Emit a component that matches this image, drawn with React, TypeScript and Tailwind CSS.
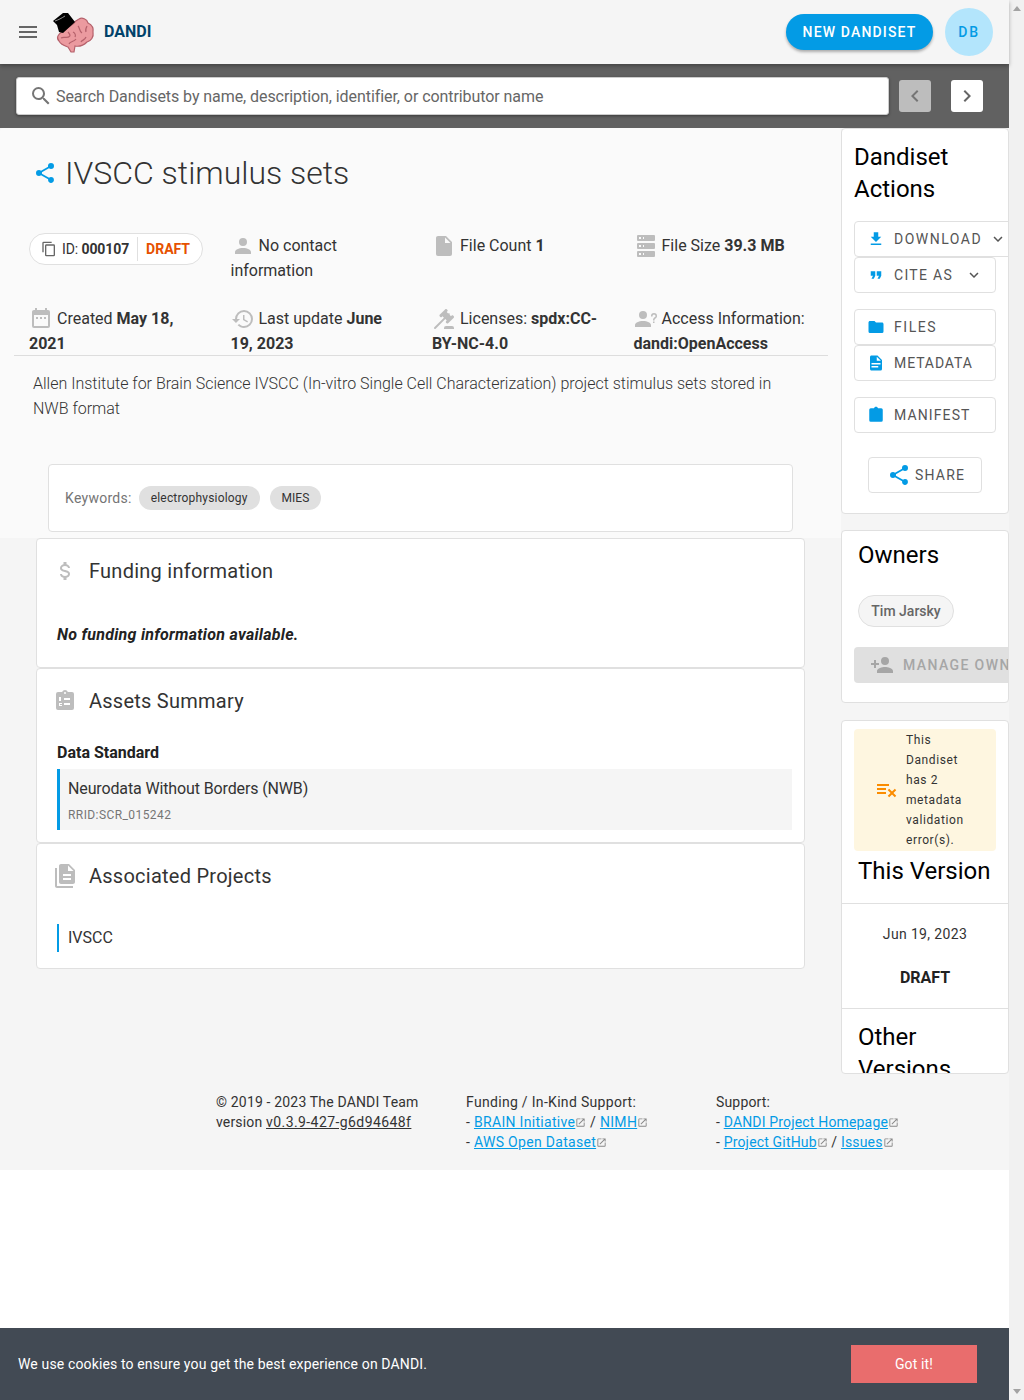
import React from "react";

const paths = {
  menu: "M3,6H21V8H3V6M3,11H21V13H3V11M3,16H21V18H3V16Z",
  search:
    "M9.5,3A6.5,6.5 0 0,1 16,9.5C16,11.11 15.41,12.59 14.44,13.73L14.71,14H15.5L20.5,19L19,20.5L14,15.5V14.71L13.73,14.44C12.59,15.41 11.11,16 9.5,16A6.5,6.5 0 0,1 3,9.5A6.5,6.5 0 0,1 9.5,3M9.5,5C7,5 5,7 5,9.5C5,12 7,14 9.5,14C12,14 14,12 14,9.5C14,7 12,5 9.5,5Z",
  share:
    "M18,16.08C17.24,16.08 16.56,16.38 16.04,16.85L8.91,12.7C8.96,12.47 9,12.24 9,12C9,11.76 8.96,11.53 8.91,11.3L15.96,7.19C16.5,7.69 17.21,8 18,8A3,3 0 0,0 21,5A3,3 0 0,0 18,2A3,3 0 0,0 15,5C15,5.24 15.04,5.47 15.09,5.7L8.04,9.81C7.5,9.31 6.79,9 6,9A3,3 0 0,0 3,12A3,3 0 0,0 6,15C6.79,15 7.5,14.69 8.04,14.19L15.16,18.34C15.11,18.55 15.08,18.77 15.08,19C15.08,20.61 16.39,21.91 18,21.91C19.61,21.91 20.92,20.61 20.92,19A2.92,2.92 0 0,0 18,16.08Z",
  calendar:
    "M9,10H7V12H9V10M13,10H11V12H13V10M17,10H15V12H17V10M19,3H18V1H16V3H8V1H6V3H5C3.89,3 3,3.9 3,5V19A2,2 0 0,0 5,21H19A2,2 0 0,0 21,19V5A2,2 0 0,0 19,3M19,19H5V8H19V19Z",
  history:
    "M13.5,8H12V13L16.28,15.54L17,14.33L13.5,12.25V8M13,3A9,9 0 0,0 4,12H1L4.96,16.03L9,12H6A7,7 0 0,1 13,5A7,7 0 0,1 20,12A7,7 0 0,1 13,19C11.07,19 9.32,18.21 8.06,16.94L6.64,18.36C8.27,20 10.5,21 13,21A9,9 0 0,0 22,12A9,9 0 0,0 13,3",
  gavel:
    "M2.3,20.28L11.9,10.68L10.5,9.26L9.78,9.97C9.39,10.36 8.76,10.36 8.37,9.97L7.66,9.26C7.27,8.87 7.27,8.24 7.66,7.85L13.32,2.19C13.71,1.8 14.34,1.8 14.73,2.19L15.44,2.9C15.83,3.29 15.83,3.92 15.44,4.31L14.73,5L16.15,6.43C16.54,6.04 17.17,6.04 17.56,6.43C17.95,6.82 17.95,7.46 17.56,7.85L18.97,9.26L19.68,8.55C20.07,8.16 20.71,8.16 21.1,8.55L21.8,9.26C22.19,9.65 22.19,10.29 21.8,10.68L16.15,16.33C15.76,16.72 15.12,16.72 14.73,16.33L14.03,15.63C13.63,15.24 13.63,14.6 14.03,14.21L14.73,13.5L13.32,12.09L3.71,21.7C3.32,22.09 2.69,22.09 2.3,21.7C1.91,21.31 1.91,20.67 2.3,20.28M20,19A2,2 0 0,1 22,21V22H12V21A2,2 0 0,1 14,19H20Z",
  account:
    "M12,4A4,4 0 0,1 16,8A4,4 0 0,1 12,12A4,4 0 0,1 8,8A4,4 0 0,1 12,4M12,14C16.42,14 20,15.79 20,18V20H4V18C4,15.79 7.58,14 12,14Z",
  accountQuestion:
    "M13,8A4,4 0 0,1 9,12A4,4 0 0,1 5,8A4,4 0 0,1 9,4A4,4 0 0,1 13,8M17,18V20H1V18C1,15.79 4.58,14 9,14C13.42,14 17,15.79 17,18M20.5,14.5V16H19V14.5H20.5M18.5,9.5H17V9A3,3 0 0,1 20,6A3,3 0 0,1 23,9C23,9.97 22.5,10.88 21.71,11.41L21.41,11.6C20.84,12 20.5,12.61 20.5,13.3V13.5H19V13.3C19,12.11 19.6,11 20.59,10.35L20.88,10.16C21.27,9.9 21.5,9.47 21.5,9A1.5,1.5 0 0,0 20,7.5A1.5,1.5 0 0,0 18.5,9V9.5Z",
  accountPlus:
    "M15,14C12.33,14 7,15.33 7,18V20H23V18C23,15.33 17.67,14 15,14M6,10V7H4V10H1V12H4V15H6V12H9V10M15,12A4,4 0 0,0 19,8A4,4 0 0,0 15,4A4,4 0 0,0 11,8A4,4 0 0,0 15,12Z",
  file: "M13,9V3.5L18.5,9M6,2C4.89,2 4,2.89 4,4V20A2,2 0 0,0 6,22H18A2,2 0 0,0 20,20V8L14,2H6Z",
  server:
    "M4,1H20A1,1 0 0,1 21,2V6A1,1 0 0,1 20,7H4A1,1 0 0,1 3,6V2A1,1 0 0,1 4,1M4,9H20A1,1 0 0,1 21,10V14A1,1 0 0,1 20,15H4A1,1 0 0,1 3,14V10A1,1 0 0,1 4,9M4,17H20A1,1 0 0,1 21,18V22A1,1 0 0,1 20,23H4A1,1 0 0,1 3,22V18A1,1 0 0,1 4,17M9,5H10V3H9V5M9,13H10V11H9V13M9,21H10V19H9V21M5,3V5H7V3H5M5,11V13H7V11H5M5,19V21H7V19H5Z",
  copy: "M19,21H8V7H19M19,5H8A2,2 0 0,0 6,7V21A2,2 0 0,0 8,23H19A2,2 0 0,0 21,21V7A2,2 0 0,0 19,5M16,1H4A2,2 0 0,0 2,3V17H4V3H16V1Z",
  usd: "M7,15H9C9,16.08 10.37,17 12,17C13.63,17 15,16.08 15,15C15,13.9 13.96,13.5 11.76,12.97C9.64,12.44 7,11.78 7,9C7,7.21 8.47,5.69 10.5,5.18V3H13.5V5.18C15.53,5.69 17,7.21 17,9H15C15,7.92 13.63,7 12,7C10.37,7 9,7.92 9,9C9,10.1 10.04,10.5 12.24,11.03C14.36,11.56 17,12.22 17,15C17,16.79 15.53,18.31 13.5,18.82V21H10.5V18.82C8.47,18.31 7,16.79 7,15Z",
  fileMultiple:
    "M16 0H8C6.9 0 6 .9 6 2V18C6 19.1 6.9 20 8 20H20C21.1 20 22 19.1 22 18V6L16 0M18 16H10V14H18V16M18 12H10V10H18V12M15 7V1.5L20.5 7H15M4 4V22H20V24H4C2.9 24 2 23.1 2 22V4H4Z",
  download: "M5,20H19V18H5M19,9H15V3H9V9H5L12,16L19,9Z",
  quote: "M14,17H17L19,13V7H13V13H16M6,17H9L11,13V7H5V13H8L6,17Z",
  folder:
    "M10,4H4C2.89,4 2,4.89 2,6V18A2,2 0 0,0 4,20H20A2,2 0 0,0 22,18V8C22,6.89 21.1,6 20,6H12L10,4Z",
  fileDocument:
    "M13,9H18.5L13,3.5V9M6,2H14L20,8V20A2,2 0 0,1 18,22H6C4.89,22 4,21.1 4,20V4C4,2.89 4.89,2 6,2M15,18V16H6V18H15M18,14V12H6V14H18Z",
  clipboard:
    "M19,3H14.82C14.4,1.84 13.3,1 12,1C10.7,1 9.6,1.84 9.18,3H5A2,2 0 0,0 3,5V19A2,2 0 0,0 5,21H19A2,2 0 0,0 21,19V5A2,2 0 0,0 19,3Z",
  clipboardList:
    "M19,3H14.82C14.4,1.84 13.3,1 12,1C10.7,1 9.6,1.84 9.18,3H5A2,2 0 0,0 3,5V19A2,2 0 0,0 5,21H19A2,2 0 0,0 21,19V5A2,2 0 0,0 19,3M12,3A1,1 0 0,1 13,4A1,1 0 0,1 12,5A1,1 0 0,1 11,4A1,1 0 0,1 12,3M11,9H17V11H11V9M11,14H17V16H11V14M6,8H8V12H6V8M6,14H9V15H7V16H9V17H6V14Z",
  chevronDown: "M7.41,8.58L12,13.17L16.59,8.58L18,10L12,16L6,10L7.41,8.58Z",
  chevronLeft: "M15.41,16.58L10.83,12L15.41,7.41L14,6L8,12L14,18L15.41,16.58Z",
  chevronRight: "M8.59,16.58L13.17,12L8.59,7.41L10,6L16,12L10,18L8.59,16.58Z",
  openInNew:
    "M14,3V5H17.59L7.76,14.83L9.17,16.24L19,6.41V10H21V3M19,19H5V5H12V3H5C3.89,3 3,3.9 3,5V19A2,2 0 0,0 5,21H19A2,2 0 0,0 21,19V12H19V19Z",
  playlistRemove:
    "M2,6V8H14V6H2M2,10V12H11V10H2M14.17,10.76L12.76,12.17L15.59,15L12.76,17.83L14.17,19.24L17,16.41L19.83,19.24L21.24,17.83L18.41,15L21.24,12.17L19.83,10.76L17,13.59L14.17,10.76M2,14V16H11V14H2Z",
};

type IconProps = {
  name: keyof typeof paths;
  className?: string;
};

const Icon = ({ name, className }: IconProps) => (
  <svg viewBox="0 0 24 24" fill="currentColor" fillRule="evenodd" className={className}>
    <path d={paths[name]} />
  </svg>
);

const Logo = () => (
  <svg viewBox="0 0 44 42" className="h-[42px] w-[44px] shrink-0">
    <path
      d="M10 21C6 23 4 27 7 30C9 34 13 35 16 36L19 41L22 41L23 35C28 36 32 34 35 31C39 30 42 26 41 21C42 16 38 13 36 12C35 8 30 6 27 8C25 9 23 10 22 12Z"
      fill="#eb9a9f"
      stroke="#b5616b"
      strokeWidth="1.2"
    />
    <path
      d="M9 27c3-2 6 1 9-2M17 33c1-3 5-2 7-5M26 15c2 2 1 5 4 7M29 31c1-2 4-2 5-5M21 21c2 1 3 3 2 5M35 15c-1 2-2 4-1 6M16 21c1 1 2 2 2 4"
      fill="none"
      stroke="#b5616b"
      strokeWidth="1.2"
    />
    <path d="M1 10L11 2L16 2L23 11L11 22L7 21L5 14Z" fill="#000" />
    <path d="M3 10C6 9 10 7 13 5" fill="none" stroke="#ccc" strokeWidth="0.7" />
  </svg>
);

const ActionButton = ({
  icon,
  label,
  chevronClass,
  className,
}: {
  icon: keyof typeof paths;
  label: string;
  chevronClass?: string;
  className?: string;
}) => (
  <div
    className={`flex h-9 items-center rounded border border-[#e0e0e0] bg-white pl-[12px] text-sm text-[#555] ${className ?? ""}`}
  >
    <Icon name={icon} className="h-[18px] w-[18px] shrink-0 text-[#039be5]" />
    <span className="ml-[9px] whitespace-nowrap">{label}</span>
    {chevronClass && <Icon name="chevronDown" className={`h-[18px] w-[18px] shrink-0 text-[#555] ${chevronClass}`} />}
  </div>
);

const MetaItem = ({ className, children }: { className?: string; children: React.ReactNode }) => (
  <div className={`pr-[24px] text-base leading-[25px] text-[#333] ${className ?? ""}`}>{children}</div>
);

const metaIcon = "-my-[3px] mr-[4px] inline-block h-6 w-6 -translate-y-[1px] align-middle text-[#bdbdbd]";

const SectionCard = ({
  icon,
  title,
  children,
}: {
  icon: keyof typeof paths;
  title: string;
  children: React.ReactNode;
}) => (
  <div className="mx-[36px] w-[769px] rounded border border-[#e0e0e0] bg-white">
    <div className="flex h-[64px] items-center pl-[16px]">
      <div className="flex w-[36px] justify-start">
        <Icon name={icon} className="h-6 w-6 text-[#bdbdbd]" />
      </div>
      <span className="text-xl tracking-[0.0125em] text-[#333]">{title}</span>
    </div>
    {children}
  </div>
);

const ExternalLink = ({ children }: { children: React.ReactNode }) => (
  <>
    <a className="text-[#039be5] underline">{children}</a>
    <Icon name="openInNew" className="inline-block h-[11px] w-[11px] align-[-1px] text-[#888]" />
  </>
);

const App = () => (
  <div
    className="relative flex h-[1400px] w-full overflow-hidden bg-white"
    style={{ fontFamily: "Roboto, 'Liberation Sans', sans-serif" }}
  >
    <div className="w-[1009px] shrink-0">
      <header className="relative z-10 flex h-16 items-center bg-[#f5f5f5] pl-4 pr-4 shadow-[0_2px_4px_rgba(0,0,0,0.3)]">
        <Icon name="menu" className="h-6 w-6 text-[#666]" />
        <div className="ml-[12px]">
          <Logo />
        </div>
        <span className="ml-[8px] text-base font-bold text-[#01426a]">DANDI</span>
        <div className="flex-1" />
        <div className="flex h-9 w-[147px] items-center justify-center rounded-full bg-[#039be5] text-sm font-medium tracking-[0.082em] text-white shadow-[0_2px_3px_rgba(0,0,0,0.3)]">
          NEW DANDISET
        </div>
        <div className="ml-3 flex h-12 w-12 items-center justify-center rounded-full bg-[#b3e5fc] text-sm font-medium tracking-[0.13em] text-[#039be5]">
          DB
        </div>
      </header>

      <div className="flex h-16 items-center bg-[#616161] pl-4 pr-[26px]">
        <div className="flex h-[38px] w-[873px] items-center rounded-[3px] border border-[#ccc] bg-white pl-[12px] shadow-[0_1px_3px_rgba(0,0,0,0.4)]">
          <Icon name="search" className="h-6 w-6 text-[#757575]" />
          <span className="ml-[3px] mt-[2px] text-base tracking-[-0.07px] text-[#666]">
            Search Dandisets by name, description, identifier, or contributor name
          </span>
        </div>
        <div className="ml-[10px] flex h-8 w-8 items-center justify-center rounded-[3px] bg-[#bdbdbd]">
          <Icon name="chevronLeft" className="h-6 w-6 text-[#757575]" />
        </div>
        <div className="ml-5 flex h-8 w-8 items-center justify-center rounded-[3px] bg-white">
          <Icon name="chevronRight" className="h-6 w-6 text-[#666]" />
        </div>
      </div>

      <div className="flex bg-[#f5f5f5]">
        <main className="w-[841px] shrink-0">
          <div className="h-[410px] rounded-t bg-[#fafafa]">
            <div className="flex items-center pl-[33px] pt-[24px]">
              <Icon name="share" className="h-6 w-6 text-[#039be5]" />
              <h1 className="ml-[8px] text-[32px] font-light leading-[42px] text-[#333]">IVSCC stimulus sets</h1>
            </div>

            <div className="ml-[29px] mt-[39px] grid w-[806px] grid-cols-4 gap-y-[23px]">
              <MetaItem>
                <div className="inline-flex h-8 items-center rounded-full border border-[#e0e0e0] bg-white pl-[11px] pr-[12px] text-sm">
                  <Icon name="copy" className="h-4 w-4 text-[#666]" />
                  <span className="ml-[5px] tracking-[-0.1px]">
                    ID: <b>000107</b>
                  </span>
                  <span className="mx-[8px] h-6 border-l border-[#e0e0e0]" />
                  <span className="font-bold text-[#e65100]">DRAFT</span>
                </div>
              </MetaItem>
              <MetaItem>
                <Icon name="account" className={metaIcon} />
                No contact information
              </MetaItem>
              <MetaItem>
                <Icon name="file" className={metaIcon} />
                File Count <b>1</b>
              </MetaItem>
              <MetaItem>
                <Icon name="server" className={metaIcon} />
                File Size <b>39.3 MB</b>
              </MetaItem>
              <MetaItem>
                <Icon name="calendar" className={metaIcon} />
                Created <b>May 18, 2021</b>
              </MetaItem>
              <MetaItem>
                <Icon name="history" className={metaIcon} />
                Last update <b>June 19, 2023</b>
              </MetaItem>
              <MetaItem>
                <Icon name="gavel" className={metaIcon} />
                Licenses: <b>spdx:CC-BY-NC-4.0</b>
              </MetaItem>
              <MetaItem className="pr-0">
                <Icon name="accountQuestion" className={metaIcon} />
                Access Information: <b>dandi:OpenAccess</b>
              </MetaItem>
            </div>

            <div className="-mt-px ml-[14px] w-[814px] border-t border-[#ddd]" />

            <p className="ml-[33px] mt-[15px] w-[760px] text-base leading-[25px] font-light text-[#333]">
              Allen Institute for Brain Science IVSCC (In-vitro Single Cell Characterization) project stimulus sets
              stored in NWB format
            </p>

            <div className="ml-[48px] mt-[43px] flex h-[68px] w-[745px] items-center rounded border border-[#e0e0e0] bg-white pl-4">
              <span className="text-sm tracking-[0.02em] text-[#757575]">Keywords:</span>
              <span className="ml-[7px] flex h-6 items-center rounded-full bg-[#e0e0e0] px-3 text-xs tracking-[0.015em] text-[#333]">
                electrophysiology
              </span>
              <span className="ml-[10px] flex h-6 items-center rounded-full bg-[#e0e0e0] px-3 text-xs text-[#333]">
                MIES
              </span>
            </div>
          </div>

          <SectionCard icon="usd" title="Funding information">
            <p className="pb-[22px] pl-[20px] pt-[22px] text-base font-bold italic leading-5 tracking-[0.27px] text-[#222]">
              No funding information available.
            </p>
          </SectionCard>

          <SectionCard icon="clipboardList" title="Assets Summary">
            <p className="pl-[20px] pt-[10px] text-base font-bold leading-5 text-[#222]">Data Standard</p>
            <div className="mb-[12px] ml-[20px] mr-[12px] mt-[6px] h-[61px] border-l-[3px] border-[#039be5] bg-[#f5f5f5] pl-2 pt-[8px]">
              <p className="text-base leading-6 tracking-[-0.13px] text-[#333]">Neurodata Without Borders (NWB)</p>
              <p className="mt-[6px] text-xs leading-4 tracking-[0.035em] text-[#757575]">RRID:SCR_015242</p>
            </div>
          </SectionCard>

          <SectionCard icon="fileMultiple" title="Associated Projects">
            <div className="mb-[16px] ml-[20px] mt-[16px] flex h-7 items-center border-l-[2px] border-[#039be5] pl-[9px] text-base text-[#333]">
              IVSCC
            </div>
          </SectionCard>
        </main>

        <aside className="w-[168px] shrink-0">
          <div className="h-[386px] overflow-hidden rounded border border-[#e0e0e0] bg-white pl-[12px] pt-[12px]">
            <h2 className="w-[120px] text-2xl leading-8 text-black">Dandiset Actions</h2>
            <div className="mt-[16px] flex flex-col">
              <ActionButton
                icon="download"
                label="DOWNLOAD"
                chevronClass="ml-[7px]"
                className="w-[160px] tracking-[0.107em]"
              />
              <ActionButton
                icon="quote"
                label="CITE AS"
                chevronClass="ml-[12px]"
                className="w-[142px] tracking-[0.093em]"
              />
              <ActionButton icon="folder" label="FILES" className="mt-4 w-[142px] tracking-[0.11em]" />
              <ActionButton icon="fileDocument" label="METADATA" className="w-[142px] tracking-[0.065em]" />
              <ActionButton icon="clipboard" label="MANIFEST" className="mt-4 w-[142px] tracking-[0.08em]" />
              <div className="ml-[14px] mt-6 flex h-9 w-[114px] items-center rounded border border-[#e0e0e0] pl-[18px] text-sm tracking-[0.085em] text-[#555]">
                <Icon name="share" className="h-6 w-6 text-[#039be5]" />
                <span className="ml-[4px]">SHARE</span>
              </div>
            </div>
          </div>

          <div className="mt-4 h-[173px] overflow-hidden rounded border border-[#e0e0e0] bg-white pl-[16px] pt-[8px]">
            <h2 className="text-2xl leading-8 text-black">Owners</h2>
            <div className="mt-[24px] flex h-8 w-[96px] items-center justify-center rounded-full border border-[#e0e0e0] bg-[#f5f5f5] text-sm font-medium text-[#666]">
              Tim Jarsky
            </div>
            <div className="-ml-[4px] mt-[20px] flex h-9 w-[200px] items-center rounded bg-[#e0e0e0] pl-[16px] text-sm font-medium tracking-[0.1em] text-[#a6a6a6]">
              <Icon name="accountPlus" className="h-6 w-6 shrink-0 text-[#a6a6a6]" />
              <span className="ml-[9px] whitespace-nowrap">MANAGE OWNERS</span>
            </div>
          </div>

          <div className="mt-[17px] h-[354px] overflow-hidden rounded border border-[#e0e0e0] bg-white">
            <div className="ml-[12px] mt-[8px] flex h-[122px] w-[142px] items-center rounded bg-[#fef6e0] pl-[21px]">
              <Icon name="playlistRemove" className="h-6 w-6 shrink-0 text-[#fb8c00]" />
              <p className="ml-[7px] w-[66px] text-xs leading-5 tracking-[0.05em] text-[#333]">
                This Dandiset has 2 metadata validation error(s).
              </p>
            </div>
            <h2 className="ml-[16px] mt-[4px] text-2xl leading-8 text-black">This Version</h2>
            <div className="mt-[16px] border-t border-[#e0e0e0] pb-[20px] pt-[20px] text-center">
              <p className="text-sm leading-5 tracking-[0.025em] text-[#333]">Jun 19, 2023</p>
              <p className="mt-[24px] text-base font-bold leading-5 text-[#222]">DRAFT</p>
            </div>
            <div className="border-t border-[#e0e0e0] pl-[16px] pt-[12px]">
              <h2 className="w-[120px] text-2xl leading-8 text-black">Other Versions</h2>
            </div>
          </div>
        </aside>
      </div>

      <footer className="grid h-[96px] grid-cols-[250px_250px_250px] bg-[#f5f5f5] pl-[216px] pt-[18px] text-sm leading-5 tracking-[0.012em] text-[#333]">
        <div>
          © 2019 - 2023 The DANDI Team
          <br />
          version <a className="tracking-[0.03em] underline">v0.3.9-427-g6d94648f</a>
        </div>
        <div className="tracking-[0.022em]">
          Funding / In-Kind Support:
          <br />
          - <ExternalLink>BRAIN Initiative</ExternalLink> / <ExternalLink>NIMH</ExternalLink>
          <br />
          - <ExternalLink>AWS Open Dataset</ExternalLink>
        </div>
        <div className="whitespace-nowrap">
          Support:
          <br />
          - <ExternalLink>DANDI Project Homepage</ExternalLink>
          <br />
          - <ExternalLink>Project GitHub</ExternalLink> / <ExternalLink>Issues</ExternalLink>
        </div>
      </footer>
    </div>

    <div className="relative w-[15px] shrink-0 bg-[#f1f1f1]">
      <div className="absolute left-[4px] top-[6px] h-0 w-0 border-x-[4px] border-b-[5px] border-x-transparent border-b-[#a3a3a3]" />
      <div className="absolute bottom-[6px] left-[4px] h-0 w-0 border-x-[4px] border-t-[5px] border-x-transparent border-t-[#a3a3a3]" />
    </div>

    <div className="absolute bottom-0 left-0 flex h-[72px] w-[1009px] items-center bg-[#424a54] pl-[18px] text-sm tracking-[0.01em] text-white">
      We use cookies to ensure you get the best experience on DANDI.
      <div className="ml-auto mr-[32px] flex h-[38px] w-[126px] items-center justify-center bg-[#e96d6d] text-sm">
        Got it!
      </div>
    </div>
  </div>
);

export default App;
